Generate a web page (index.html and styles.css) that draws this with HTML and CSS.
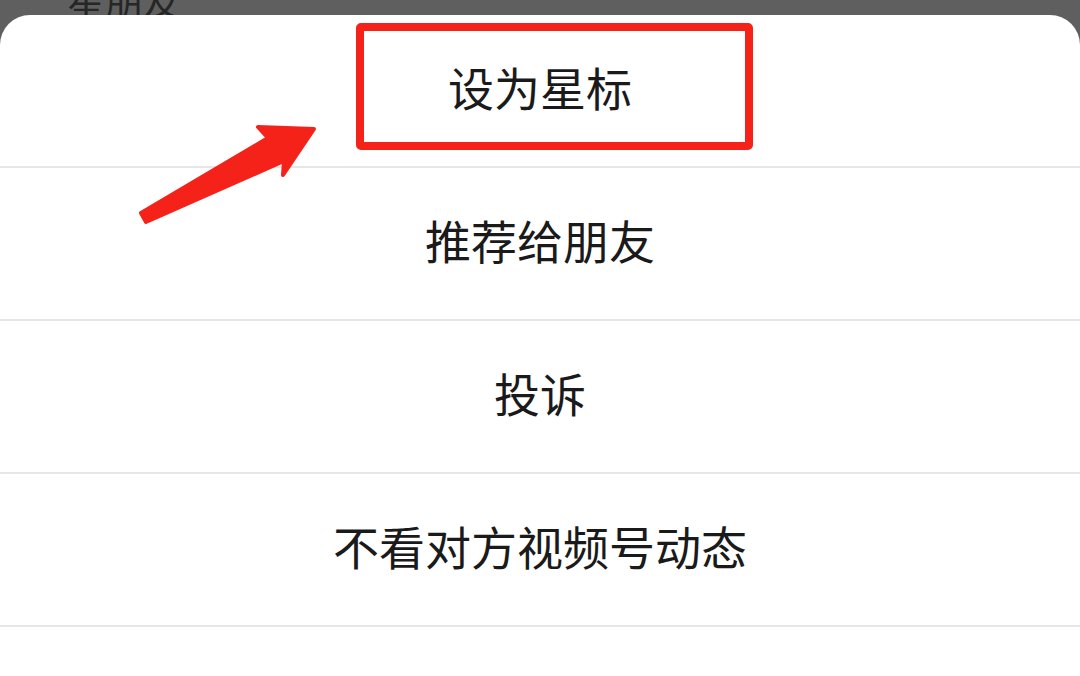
FILE: index.html
```html
<!DOCTYPE html>
<html lang="zh">
<head>
  <meta charset="UTF-8">
  <title>action sheet</title>
  <link rel="stylesheet" href="styles.css">
</head>
<body>

  <!-- 背后被遮住的页面 -->
  <div class="backdrop">
    <span class="backdrop-text">星朋友</span>
  </div>

  <div class="sheet">
    <div class="sheet-item">设为星标</div>
    <div class="sheet-item">推荐给朋友</div>
    <div class="sheet-item">投诉</div>
    <div class="sheet-item">不看对方视频号动态</div>

    <!-- 标注 -->
    <div class="mark-box"></div>
    <svg class="mark-arrow" width="200" height="110" viewBox="130 120 200 110">
      <polygon points="141,213 268,138 258,127 314,129 283,175 284,161 146,222"
        fill="#f5221a" stroke="#f5221a" stroke-width="4" stroke-linejoin="round"/>
    </svg>
  </div>

</body>
</html>
```

FILE: styles.css
```css
html, body {
  margin: 0;
  padding: 0;
}

body {
  font-family: "Noto Sans CJK SC", "Noto Sans", sans-serif;
  background-color: #5f5f5f;
  width: 1080px;
  height: 676px;
  overflow: hidden;
}

.backdrop {
  height: 15px;
  overflow: hidden;
  padding-left: 67px;
}

.backdrop-text {
  display: block;
  font-size: 38px;
  line-height: 38px;
  margin-top: -20px;
  color: #262626;
}

.sheet {
  position: relative;
  background-color: #fff;
  border-radius: 30px 30px 0 0;
  height: 661px;
}

.sheet-item {
  box-sizing: border-box;
  height: 153px;
  padding-bottom: 10px;
  border-bottom: 2px solid #e6e6e6;
  display: flex;
  align-items: center;
  justify-content: center;
  font-size: 46px;
  color: #1a1a1a;
}

.mark-box {
  position: absolute;
  left: 356px;
  top: 8px;
  width: 381px;
  height: 111px;
  border: 8px solid #f5221a;
  border-radius: 5px;
}

.mark-arrow {
  position: absolute;
  left: 130px;
  top: 105px;
}
```
